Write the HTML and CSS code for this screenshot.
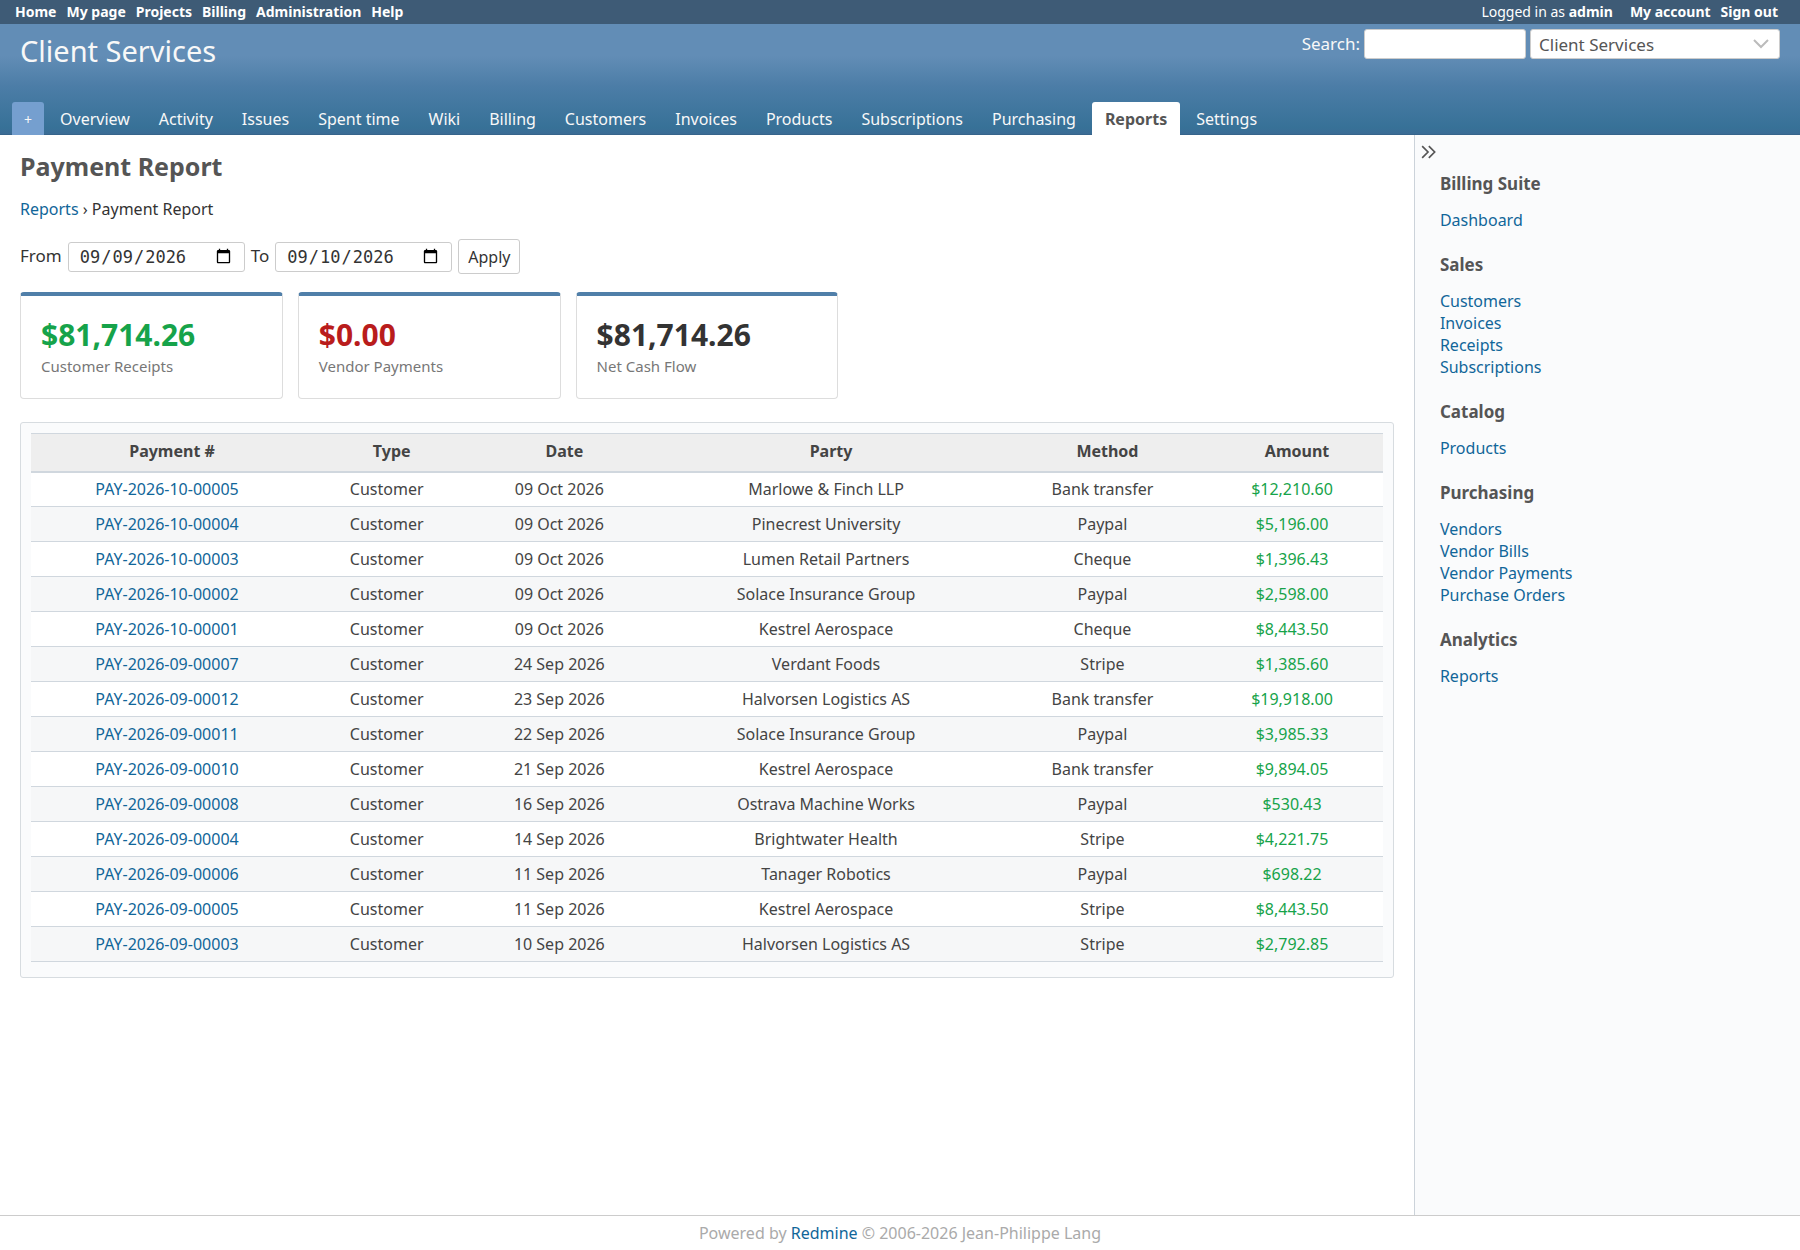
FILE: index.html
```html
<!DOCTYPE html>
<html lang="en">
<head>
<meta charset="utf-8">
<title>Payment Report - Client Services - Redmine</title>
<link rel="stylesheet" href="styles.css">
</head>
<body>
<nav class="top-menu">
  <a href="#">Home</a>
  <a href="#">My page</a>
  <a href="#">Projects</a>
  <a href="#">Billing</a>
  <a href="#">Administration</a>
  <a href="#">Help</a>
  <span class="logged-as">Logged in as <a href="#">admin</a></span>
  <a href="#">My account</a>
  <a href="#">Sign out</a>
</nav>
<header class="header">
  <div class="header-bar">
    <h1>Client Services</h1>
    <form class="quick-search">
      <label for="q">Search:</label>
      <input type="text" id="q" class="search-box">
      <select class="project-jump" aria-label="Project"><option>Client Services</option></select>
    </form>
  </div>
  <nav class="main-menu">
    <a href="#" class="new-object">+</a>
    <a href="#">Overview</a>
    <a href="#">Activity</a>
    <a href="#">Issues</a>
    <a href="#">Spent time</a>
    <a href="#">Wiki</a>
    <a href="#">Billing</a>
    <a href="#">Customers</a>
    <a href="#">Invoices</a>
    <a href="#">Products</a>
    <a href="#">Subscriptions</a>
    <a href="#">Purchasing</a>
    <a href="#" class="selected">Reports</a>
    <a href="#">Settings</a>
  </nav>
</header>
<div class="main">
  <main class="content">
    <h2>Payment Report</h2>
    <p class="breadcrumb"><a href="#">Reports</a> › Payment Report</p>
    <form class="filters">
      <label for="from">From</label>
      <input type="date" id="from" value="2026-09-09">
      <label for="to">To</label>
      <input type="date" id="to" value="2026-09-10">
      <button type="button">Apply</button>
    </form>
    <section class="cards">
      <div class="card"><div class="value positive">$81,714.26</div><div class="caption">Customer Receipts</div></div>
      <div class="card"><div class="value negative">$0.00</div><div class="caption">Vendor Payments</div></div>
      <div class="card"><div class="value">$81,714.26</div><div class="caption">Net Cash Flow</div></div>
    </section>
    <div class="box">
      <table class="list">
        <thead>
          <tr><th>Payment #</th><th>Type</th><th>Date</th><th>Party</th><th>Method</th><th>Amount</th></tr>
        </thead>
        <tbody>
          <tr><td><a href="#">PAY-2026-10-00005</a></td><td>Customer</td><td>09 Oct 2026</td><td>Marlowe &amp; Finch LLP</td><td>Bank transfer</td><td class="amount">$12,210.60</td></tr>
          <tr><td><a href="#">PAY-2026-10-00004</a></td><td>Customer</td><td>09 Oct 2026</td><td>Pinecrest University</td><td>Paypal</td><td class="amount">$5,196.00</td></tr>
          <tr><td><a href="#">PAY-2026-10-00003</a></td><td>Customer</td><td>09 Oct 2026</td><td>Lumen Retail Partners</td><td>Cheque</td><td class="amount">$1,396.43</td></tr>
          <tr><td><a href="#">PAY-2026-10-00002</a></td><td>Customer</td><td>09 Oct 2026</td><td>Solace Insurance Group</td><td>Paypal</td><td class="amount">$2,598.00</td></tr>
          <tr><td><a href="#">PAY-2026-10-00001</a></td><td>Customer</td><td>09 Oct 2026</td><td>Kestrel Aerospace</td><td>Cheque</td><td class="amount">$8,443.50</td></tr>
          <tr><td><a href="#">PAY-2026-09-00007</a></td><td>Customer</td><td>24 Sep 2026</td><td>Verdant Foods</td><td>Stripe</td><td class="amount">$1,385.60</td></tr>
          <tr><td><a href="#">PAY-2026-09-00012</a></td><td>Customer</td><td>23 Sep 2026</td><td>Halvorsen Logistics AS</td><td>Bank transfer</td><td class="amount">$19,918.00</td></tr>
          <tr><td><a href="#">PAY-2026-09-00011</a></td><td>Customer</td><td>22 Sep 2026</td><td>Solace Insurance Group</td><td>Paypal</td><td class="amount">$3,985.33</td></tr>
          <tr><td><a href="#">PAY-2026-09-00010</a></td><td>Customer</td><td>21 Sep 2026</td><td>Kestrel Aerospace</td><td>Bank transfer</td><td class="amount">$9,894.05</td></tr>
          <tr><td><a href="#">PAY-2026-09-00008</a></td><td>Customer</td><td>16 Sep 2026</td><td>Ostrava Machine Works</td><td>Paypal</td><td class="amount">$530.43</td></tr>
          <tr><td><a href="#">PAY-2026-09-00004</a></td><td>Customer</td><td>14 Sep 2026</td><td>Brightwater Health</td><td>Stripe</td><td class="amount">$4,221.75</td></tr>
          <tr><td><a href="#">PAY-2026-09-00006</a></td><td>Customer</td><td>11 Sep 2026</td><td>Tanager Robotics</td><td>Paypal</td><td class="amount">$698.22</td></tr>
          <tr><td><a href="#">PAY-2026-09-00005</a></td><td>Customer</td><td>11 Sep 2026</td><td>Kestrel Aerospace</td><td>Stripe</td><td class="amount">$8,443.50</td></tr>
          <tr><td><a href="#">PAY-2026-09-00003</a></td><td>Customer</td><td>10 Sep 2026</td><td>Halvorsen Logistics AS</td><td>Stripe</td><td class="amount">$2,792.85</td></tr>
        </tbody>
      </table>
    </div>
  </main>
  <aside class="sidebar">
    <button type="button" class="collapse" aria-label="Collapse sidebar">
      <svg width="20" height="20" viewBox="0 0 24 24" fill="none" stroke="currentColor" stroke-width="2"><path d="M5 5l7 7-7 7M13 5l7 7-7 7"/></svg>
    </button>
    <h3>Billing Suite</h3>
    <ul><li><a href="#">Dashboard</a></li></ul>
    <h3>Sales</h3>
    <ul>
      <li><a href="#">Customers</a></li>
      <li><a href="#">Invoices</a></li>
      <li><a href="#">Receipts</a></li>
      <li><a href="#">Subscriptions</a></li>
    </ul>
    <h3>Catalog</h3>
    <ul><li><a href="#">Products</a></li></ul>
    <h3>Purchasing</h3>
    <ul>
      <li><a href="#">Vendors</a></li>
      <li><a href="#">Vendor Bills</a></li>
      <li><a href="#">Vendor Payments</a></li>
      <li><a href="#">Purchase Orders</a></li>
    </ul>
    <h3>Analytics</h3>
    <ul><li><a href="#">Reports</a></li></ul>
  </aside>
</div>
<footer class="footer">Powered by <a href="#">Redmine</a> © 2006-2026 Jean-Philippe Lang</footer>
</body>
</html>
```
FILE: styles.css
```css
*, *::before, *::after { box-sizing: border-box; }

body {
  display: flex;
  flex-direction: column;
  min-height: 100vh;
  margin: 0;
  background: #fff;
  color: #333;
  font-family: "Noto Sans", sans-serif;
  font-size: 16px;
  line-height: 22px;
}

a { color: #169; text-decoration: none; }
h1, h2, h3, p, ul { margin: 0; padding: 0; }

input, select, button {
  border: 1px solid #ccc;
  border-radius: 3px;
  background: #fff;
  color: #333;
  font-family: inherit;
  font-size: 17px;
}

/* Top bar */
.top-menu {
  display: flex;
  gap: 10px;
  height: 24px;
  padding: 0 22px 0 15px;
  background: #3e5b76;
  color: #fff;
  font-size: 14px;
  line-height: 24px;
}
.top-menu a { color: #fff; font-weight: bold; }
.logged-as { margin-left: auto; padding-right: 7px; }

/* Project header */
.header {
  display: flex;
  flex-direction: column;
  justify-content: space-between;
  min-height: 111px;
  border-bottom: 1px solid #36648b;
  background: linear-gradient(#628db6 0, #628db6 32px, #4c7da7 62px, #377197 104px, #3a6b95 110px);
  color: #f8f8f8;
}
.header-bar {
  display: flex;
  justify-content: space-between;
  padding: 5px 20px 0;
}
.header h1 { font-size: 29px; font-weight: normal; line-height: 44px; }
.quick-search { display: flex; align-items: flex-start; gap: 4px; font-size: 17px; line-height: 30px; }
.search-box { width: 162px; height: 30px; padding: 4px 8px; }
.project-jump {
  appearance: none;
  width: 250px;
  height: 30px;
  padding: 0 8px;
  color: #555;
  background: #fff url("data:image/svg+xml,%3Csvg xmlns='http://www.w3.org/2000/svg' width='16' height='10' fill='none' stroke='%23bbb' stroke-width='2'%3E%3Cpath d='M1 1l7 7 7-7'/%3E%3C/svg%3E") no-repeat right 10px center;
}
.main-menu { display: flex; gap: 3px; padding-left: 12px; margin-bottom: -1px; }
.main-menu a {
  padding: 2px 13px 0;
  border-radius: 3px 3px 0 0;
  color: #f8f8f8;
  line-height: 31px;
}
.main-menu .new-object { padding: 2px 12px 0; background: #759fcf; font-size: 14px; }
.main-menu .selected { background: #fff; color: #555; font-weight: bold; }

/* Page body */
.main { display: flex; flex: 1; }
.content { flex: 1; min-width: 0; padding: 14px 20px; }
.content h2 { color: #555; font-size: 25px; line-height: 34px; }
.breadcrumb { margin: 15px 0 19px; }

.filters { display: flex; align-items: center; gap: 6px; font-size: 17px; }
.filters label { line-height: 24px; padding-bottom: 2px; }
.filters input {
  width: 177px;
  height: 30px;
  padding: 0 10px;
  font-family: "DejaVu Sans Mono", monospace;
}
.filters button { height: 35px; padding: 0 9px; font-size: 16px; }

.cards {
  display: grid;
  grid-template-columns: repeat(5, 1fr);
  gap: 15px;
  margin: 18px 0 23px;
}
.card {
  padding: 18px 20px 21px;
  border: 1px solid #ddd;
  border-top: 4px solid #507fa9;
  border-radius: 4px;
}
.value { font-size: 30px; font-weight: bold; line-height: 41px; }
.positive, .amount { color: #16a34a; }
.negative { color: #b91c1c; }
.caption { color: #777; font-size: 15px; }

.box {
  padding: 10px 10px 15px;
  border: 1px solid #d7dce0;
  border-radius: 3px;
  background: #fafbfc;
}
.list { width: 100%; border-collapse: collapse; }
.list th {
  height: 38px;
  padding: 0 4px 2px;
  border-top: 1px solid #d0d7de;
  border-bottom: 2px solid #d0d7de;
  background: #eee;
  color: #444;
}
.list td {
  height: 35px;
  padding: 0 12px 0 2px;
  border-bottom: 1px solid #d0d7de;
  background: #fff;
  color: #444;
  text-align: center;
}
.list tbody tr:nth-child(even) td { background: #f6f7f8; }
.list .amount { color: #16a34a; }

/* Sidebar */
.sidebar {
  width: 21.45%;
  padding: 7px 25px 20px;
  border-left: 1px solid #ccd3da;
  background: #fafbfc;
}
.collapse {
  display: block;
  width: 20px;
  height: 20px;
  margin: 0 0 10px -22px;
  padding: 0;
  border: 0;
  background: none;
  color: #555;
}
.collapse svg { display: block; }
.sidebar h3 { color: #555; font-size: 17px; line-height: 24px; }
.sidebar ul { padding: 13px 0 22px; list-style: none; }

.footer {
  padding: 6px 0;
  border-top: 1px solid #ccc;
  color: #aaa;
  font-size: 16px;
  text-align: center;
}
```
